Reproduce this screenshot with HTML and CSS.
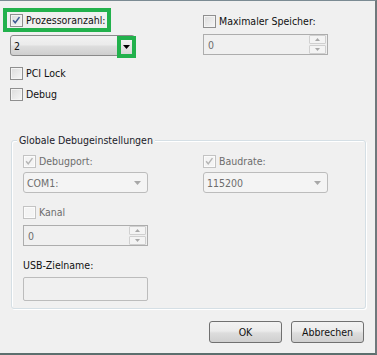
FILE: index.html
```html
<!DOCTYPE html>
<html>
<head>
<meta charset="utf-8">
<link rel="stylesheet" href="styles.css">
</head>
<body>
<div class="window">
  <div class="top">
    <div class="col left">
      <label class="check hl"><span class="cb"><svg viewBox="0 0 13 13" width="11" height="11"><path d="M2.5 6.2 L5 9.2 L10 2.5" fill="none" stroke="#3f5a94" stroke-width="1.8"/></svg></span>Prozessoranzahl:</label>
      <div class="combo">
        <span class="val">2</span>
        <span class="arrowbtn"><svg viewBox="0 0 7 4" width="7" height="4"><path d="M0 0 H7 L3.5 4 Z" fill="#000"/></svg></span>
      </div>
      <label class="check row"><span class="cb"></span>PCI Lock</label>
      <label class="check row"><span class="cb"></span>Debug</label>
    </div>
    <div class="col right">
      <label class="check row first"><span class="cb"></span>Maximaler Speicher:</label>
      <div class="spin dis">
        <span class="val">0</span>
        <span class="spinbtns">
          <span class="sb"><svg viewBox="0 0 5 3" width="5" height="3"><path d="M0 3 H5 L2.5 0 Z" fill="#a8a8a8"/></svg></span>
          <span class="sb"><svg viewBox="0 0 5 3" width="5" height="3"><path d="M0 0 H5 L2.5 3 Z" fill="#a8a8a8"/></svg></span>
        </span>
      </div>
    </div>
  </div>

  <div class="group">
    <div class="gtitle">Globale Debugeinstellungen</div>
    <div class="ggrid">
      <label class="check row dtext"><span class="cb dcb"><svg viewBox="0 0 13 13" width="11" height="11"><path d="M2.5 6.2 L5 9.2 L10 2.5" fill="none" stroke="#b4b4b4" stroke-width="1.6"/></svg></span>Debugport:</label>
      <label class="check row dtext"><span class="cb dcb"><svg viewBox="0 0 13 13" width="11" height="11"><path d="M2.5 6.2 L5 9.2 L10 2.5" fill="none" stroke="#b4b4b4" stroke-width="1.6"/></svg></span>Baudrate:</label>

      <div class="dcombo"><span class="val">COM1:</span><svg viewBox="0 0 7 4" width="7" height="4"><path d="M0 0 H7 L3.5 4 Z" fill="#a8a8a8"/></svg></div>
      <div class="dcombo"><span class="val">115200</span><svg viewBox="0 0 7 4" width="7" height="4"><path d="M0 0 H7 L3.5 4 Z" fill="#a8a8a8"/></svg></div>

      <label class="check row dtext kanal"><span class="cb dcb"></span>Kanal</label>
      <div></div>

      <div class="spin dis kspin">
        <span class="val">0</span>
        <span class="spinbtns">
          <span class="sb"><svg viewBox="0 0 5 3" width="5" height="3"><path d="M0 3 H5 L2.5 0 Z" fill="#a8a8a8"/></svg></span>
          <span class="sb"><svg viewBox="0 0 5 3" width="5" height="3"><path d="M0 0 H5 L2.5 3 Z" fill="#a8a8a8"/></svg></span>
        </span>
      </div>
      <div></div>

      <div class="usblabel">USB-Zielname:</div>
      <div></div>
      <div class="textbox"></div>
    </div>
  </div>

  <div class="buttons">
    <button class="btn">OK</button>
    <button class="btn">Abbrechen</button>
  </div>
</div>
</body>
</html>
```

FILE: styles.css
```css
* { box-sizing: border-box; }
html, body { margin: 0; padding: 0; }
body {
  width: 377px;
  height: 355px;
  overflow: hidden;
  background: #f0f0f0;
  font-family: "DejaVu Sans Condensed", "Liberation Sans", Arial, sans-serif;
  font-size: 10.5px;
  color: #111;
}
.window {
  width: 377px;
  height: 355px;
  background: #f0f0f0;
  border-top: 1px solid #7b8b93;
  border-right: 2px solid #6f797c;
  border-bottom: 2px solid #5c6f6e;
  display: flex;
  flex-direction: column;
}
.top {
  height: 139px;
  flex: none;
  padding: 7px 0 0 3px;
  display: flex;
}
.col { display: flex; flex-direction: column; align-items: flex-start; }
.left { width: 200px; }
.right { width: 170px; }

.check {
  display: flex;
  align-items: center;
  white-space: nowrap;
  line-height: 13px;
}
.row { height: 21px; }
.left .row { margin-left: 7px; }
.left .combo + .row { margin-top: 7px; }
.right .first { margin-top: 3px; }

.hl {
  height: 24px;
  border: 4px solid #22b14c;
  padding: 0 1px 0 3px;
}
.cb {
  width: 13px;
  height: 13px;
  margin-right: 3px;
  flex: none;
  border: 1px solid #8f8f8f;
  background: linear-gradient(135deg, #dcdcdc, #f6f6f6);
  box-shadow: inset 0 0 0 1px #f4f4f4;
  display: flex;
  align-items: center;
  justify-content: center;
}
.dcb {
  border-color: #c3c3c3;
  background: #f4f4f4;
  box-shadow: inset 0 0 0 1px #fbfbfb;
}
.dtext { color: #6d6d6d; }

.combo {
  position: relative;
  margin: 3px 0 0 7px;
  width: 125px;
  height: 21px;
  border: 1px solid #8a8a8a;
  border-radius: 3px;
  background: linear-gradient(#f2f2f2 0%, #ebebeb 45%, #dddddd 55%, #cfcfcf 100%);
  display: flex;
  align-items: center;
  padding-left: 3px;
}
.arrowbtn {
  position: absolute;
  right: -2px;
  top: 0px;
  width: 19px;
  height: 22px;
  border: 4px solid #22b14c;
  background: linear-gradient(#f2f2f2, #d8d8d8);
  display: flex;
  align-items: center;
  justify-content: center;
}

.spin {
  width: 125px;
  height: 21px;
  border: 1px solid #adadad;
  background: #f0f0f0;
  display: flex;
  align-items: center;
  justify-content: space-between;
  padding-left: 4px;
  color: #6d6d6d;
}
.right .spin { margin-top: 2px; }
.spinbtns {
  display: flex;
  flex-direction: column;
  height: 19px;
  width: 17px;
  margin-right: 1px;
  gap: 1px;
}
.sb {
  flex: 1;
  border: 1px solid #d0d0d0;
  border-radius: 1px;
  background: #f4f4f4;
  display: flex;
  align-items: center;
  justify-content: center;
}

.group {
  margin-left: 11px;
  width: 355px;
  height: 169px;
  flex: none;
  border: 1px solid #d5dfe5;
  border-radius: 3px;
  box-shadow: inset 1px 1px 0 #fff, 1px 1px 0 #fff;
  display: flex;
  flex-direction: column;
  align-items: flex-start;
}
.gtitle {
  margin: -7px 0 0 5px;
  padding: 0 2px;
  height: 13px;
  line-height: 13px;
  background: #f0f0f0;
  color: #1a1a2a;
  white-space: nowrap;
}
.ggrid {
  display: grid;
  grid-template-columns: 180px 160px;
  padding-left: 11px;
  margin-top: 4px;
  align-items: start;
}
.dcombo {
  width: 125px;
  height: 21px;
  border: 1px solid #bcbcbc;
  border-radius: 3px;
  background: #f4f4f4;
  color: #6d6d6d;
  display: flex;
  align-items: center;
  justify-content: space-between;
  padding: 0 6px 0 3px;
}
.kanal { margin-top: 9px; }
.kspin { margin-top: 2px; }
.usblabel {
  margin-top: 13px;
  line-height: 13px;
  grid-column: 1;
}
.textbox {
  margin-top: 5px;
  width: 125px;
  height: 24px;
  border: 1px solid #bcbcbc;
  border-radius: 2px;
  background: #f0f0f0;
}

.buttons {
  display: flex;
  justify-content: flex-end;
  gap: 9px;
  padding-right: 11px;
  margin-top: 12px;
}
.btn {
  width: 73px;
  height: 22px;
  border: 1px solid #707070;
  border-radius: 3px;
  background: linear-gradient(#f2f2f2 0%, #ebebeb 45%, #dddddd 55%, #cfcfcf 100%);
  font-family: "DejaVu Sans Condensed", "Liberation Sans", Arial, sans-serif;
  font-size: 10.5px;
  color: #111;
  padding: 0;
}
```
